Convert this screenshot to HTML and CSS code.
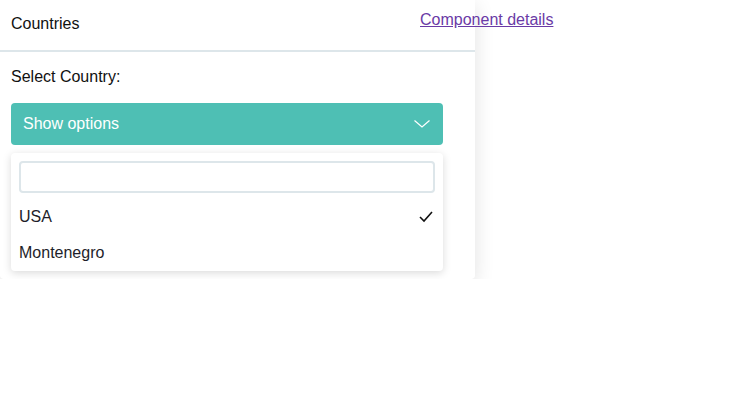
FILE: index.html
```html
<!DOCTYPE html>
<html>
<head>
<meta charset="utf-8">
<link rel="stylesheet" href="styles.css">
</head>
<body>
<div class="card">
  <div class="card-header">Countries</div>
  <div class="card-body">
    <div class="label">Select Country:</div>
    <button class="select-btn">
      <span>Show options</span>
      <svg width="18" height="10" viewBox="0 0 18 10"><polyline points="1.5,1.5 9,8 16.5,1.5" fill="none" stroke="#fff" stroke-width="1.2"/></svg>
    </button>
    <div class="dropdown">
      <input class="search" type="text">
      <ul class="options">
        <li class="option">USA<svg width="16" height="14" viewBox="0 0 16 14"><polyline points="2,7 6,11 14,2" fill="none" stroke="#111" stroke-width="1.6"/></svg></li>
        <li class="option">Montenegro</li>
      </ul>
    </div>
  </div>
</div>
<a class="details-link" href="#">Component details</a>
</body>
</html>
```
FILE: styles.css
```css
body {
  margin: 0;
  font-family: "Liberation Sans", Arial, sans-serif;
  font-size: 16px;
  color: #111;
  background: #fff;
}
.card {
  width: 475px;
  background: #fff;
  border-radius: 0 0 4px 4px;
  box-shadow: 0 6px 20px rgba(0, 0, 0, 0.12);
}
.card-header {
  box-sizing: border-box;
  height: 52px;
  padding: 0 11px 3px;
  display: flex;
  align-items: center;
  border-bottom: 2px solid #dde6ea;
}
.card-body {
  padding: 16px 11px 8px;
}
.label {
  line-height: 18px;
  margin-bottom: 17px;
}
.select-btn {
  box-sizing: border-box;
  width: 432px;
  height: 42px;
  display: flex;
  align-items: center;
  justify-content: space-between;
  padding: 0 12px 0 12px;
  border: none;
  border-radius: 4px;
  background: #4ebfb4;
  color: #fff;
  font-family: inherit;
  font-size: 16px;
}
.dropdown {
  box-sizing: border-box;
  width: 432px;
  margin-top: 8px;
  padding: 8px 8px 0;
  background: #fff;
  border-radius: 4px;
  box-shadow: 0 2px 8px rgba(0, 0, 0, 0.15);
}
.search {
  box-sizing: border-box;
  display: block;
  width: 100%;
  height: 32px;
  border: 2px solid #dde6ea;
  border-radius: 4px;
  margin: 0;
  padding: 0 8px;
  outline: none;
}
.options {
  list-style: none;
  margin: 6px 0 0;
  padding: 0;
}
.option {
  height: 36px;
  display: flex;
  align-items: center;
  justify-content: space-between;
  color: #1e1e2a;
}
.option svg {
  margin-right: 1px;
}
.details-link {
  position: absolute;
  left: 420px;
  top: 11px;
  color: #6a3aa6;
  text-decoration: underline;
}
```
